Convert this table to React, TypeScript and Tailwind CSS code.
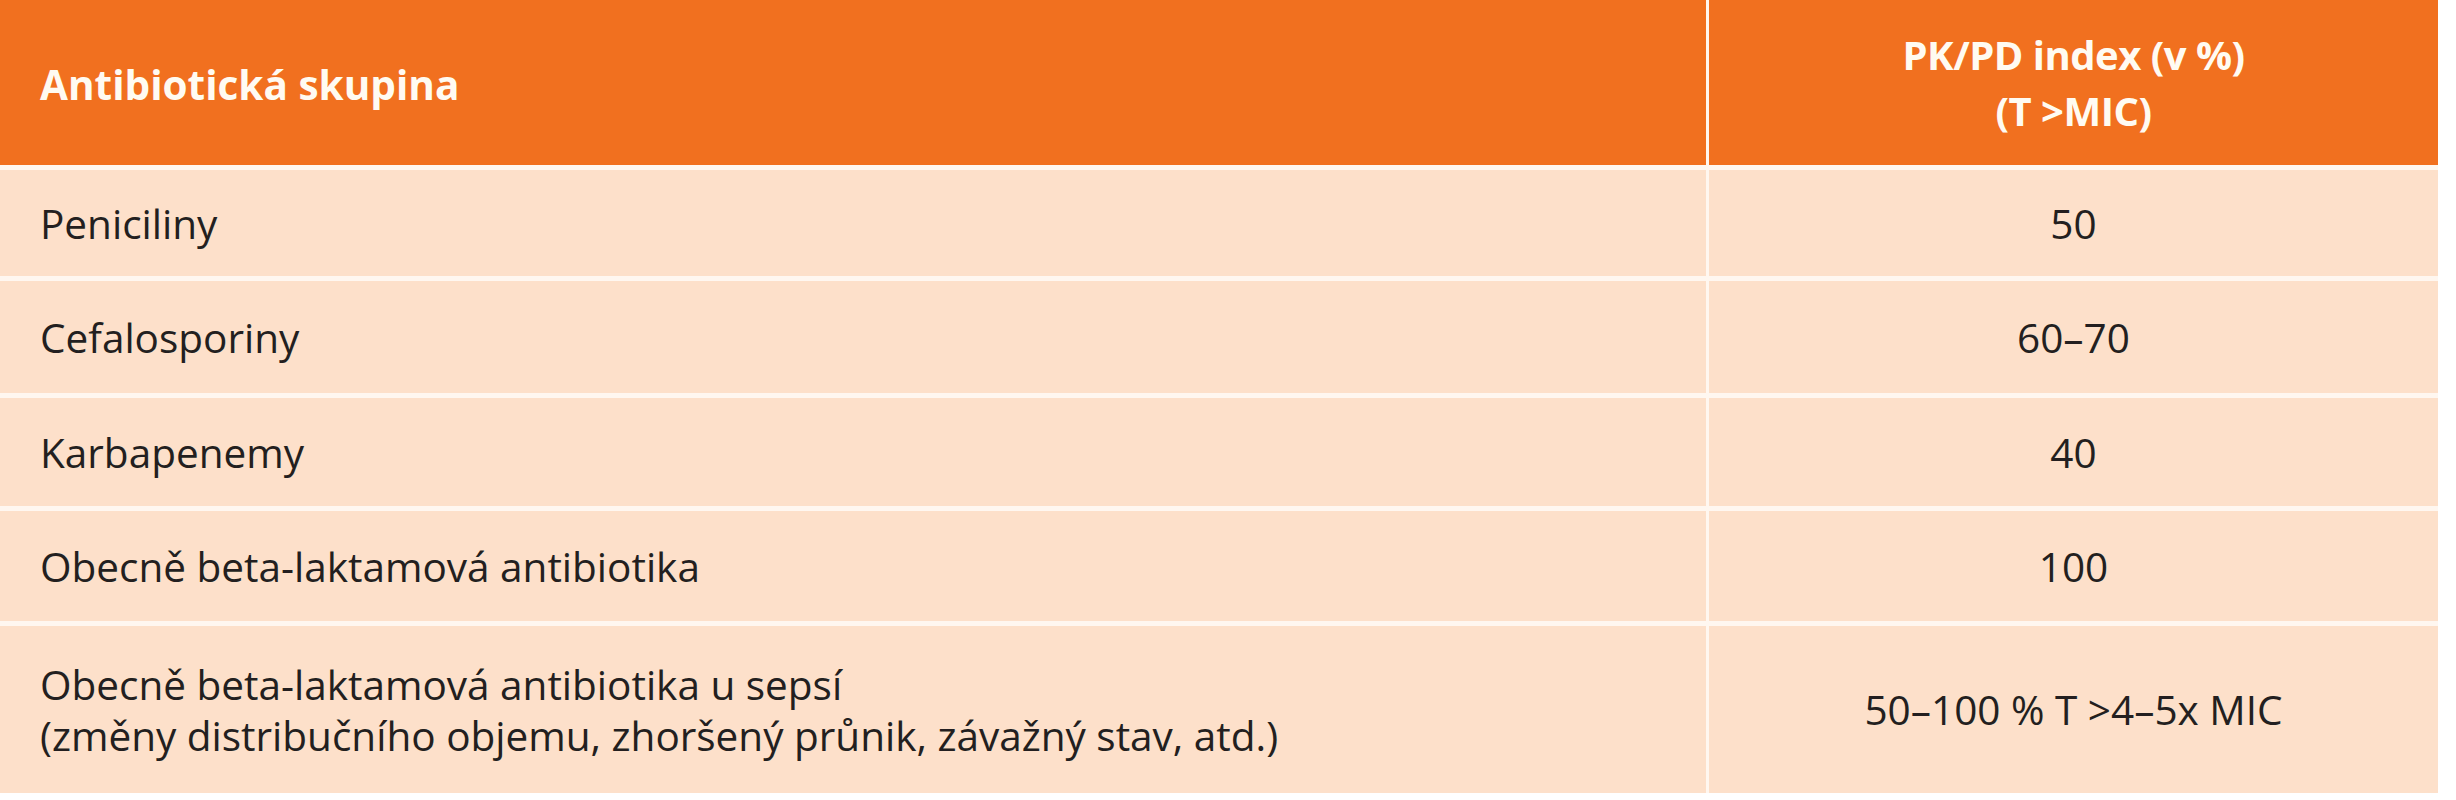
import React from "react";

const rows: { name: React.ReactNode; value: string; h: string }[] = [
  { name: "Peniciliny", value: "50", h: "h-[106px]" },
  { name: "Cefalosporiny", value: "60–70", h: "h-[112px]" },
  { name: "Karbapenemy", value: "40", h: "h-[108px]" },
  { name: "Obecně beta-laktamová antibiotika", value: "100", h: "h-[110px]" },
  {
    name: (
      <>
        Obecně beta-laktamová antibiotika u sepsí
        <br />
        (změny distribučního objemu, zhoršený průnik, závažný stav, atd.)
      </>
    ),
    value: "50–100 % T >4–5x MIC",
    h: "h-[167px]",
  },
];

export default function App() {
  return (
    <div className="w-[2456px] h-[800px] bg-white font-['Open_Sans','Noto_Sans',sans-serif]">
      <div className="grid w-[2438px] grid-cols-[1706px_729px] gap-x-[3px] gap-y-[5px] bg-[#FFF7F0]">
        <div className="h-[165px] bg-[#F1701F] flex items-center pl-[40px] pt-[6px] text-[40.5px] font-bold text-[#FFFBF2]">
          Antibiotická skupina
        </div>
        <div className="h-[165px] bg-[#F1701F] flex flex-col items-center justify-center text-[40px] leading-[56px] font-bold text-[#FFFBF2] tracking-[-0.5px]">
          <span>PK/PD index (v %)</span>
          <span>(T &gt;MIC)</span>
        </div>
        {rows.map((r, i) => (
          <React.Fragment key={i}>
            <div
              className={`${r.h} bg-[#FDE0CA] flex items-center pl-[40px] text-[40.5px] leading-[51px] text-[#231F20]`}
            >
              <span>{r.name}</span>
            </div>
            <div
              className={`${r.h} bg-[#FDE0CA] flex items-center justify-center text-[40.5px] leading-[51px] text-[#231F20]`}
            >
              {r.value}
            </div>
          </React.Fragment>
        ))}
      </div>
    </div>
  );
}
